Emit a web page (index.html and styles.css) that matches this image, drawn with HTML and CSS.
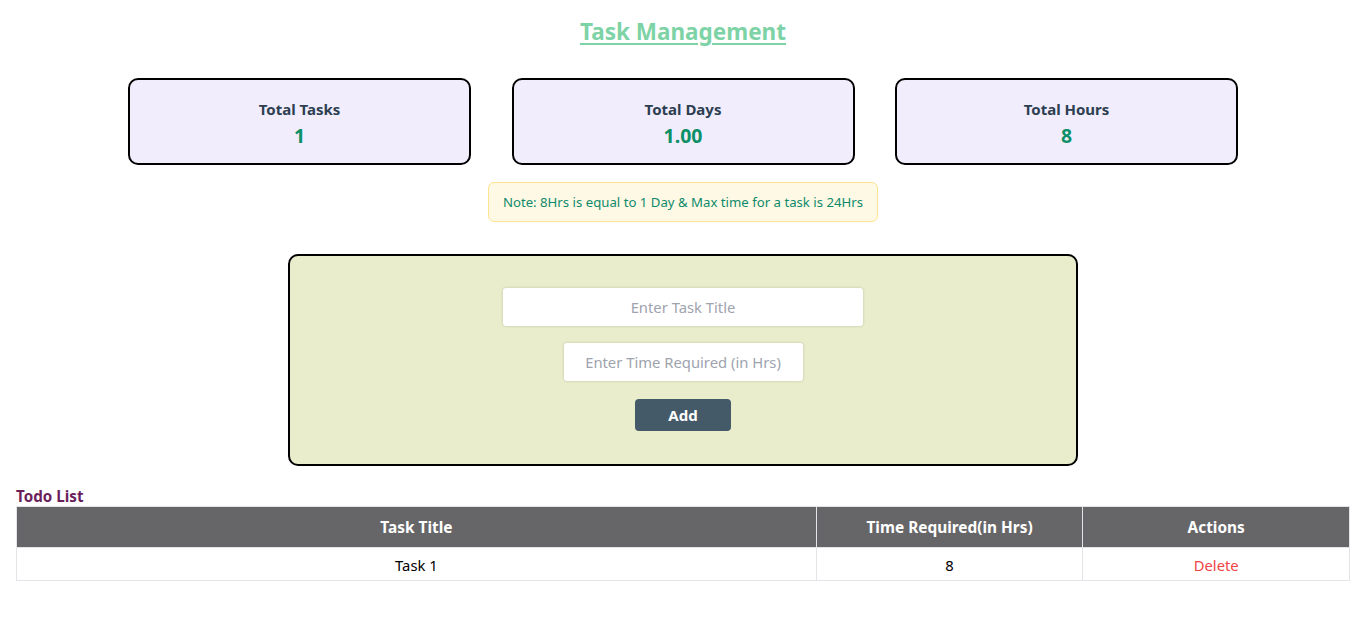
FILE: index.html
```html
<!DOCTYPE html>
<html lang="en">
<head>
<meta charset="utf-8">
<title>Task Management</title>
<link rel="stylesheet" href="styles.css">
</head>
<body>
<div class="app">
  <h1 class="title">Task Management</h1>
  <div class="cards">
    <div class="card"><div class="card-label">Total Tasks</div><div class="card-value">1</div></div>
    <div class="card"><div class="card-label">Total Days</div><div class="card-value">1.00</div></div>
    <div class="card"><div class="card-label">Total Hours</div><div class="card-value">8</div></div>
  </div>
  <div class="note-wrap"><div class="note">Note: 8Hrs is equal to 1 Day &amp; Max time for a task is 24Hrs</div></div>
  <div class="form-wrap">
    <div class="form">
      <input class="input input-title" type="text" placeholder="Enter Task Title">
      <input class="input input-time" type="text" placeholder="Enter Time Required (in Hrs)">
      <button class="btn">Add</button>
    </div>
  </div>
  <div class="list-title">Todo List</div>
  <table class="table">
    <thead>
      <tr><th class="c1">Task Title</th><th class="c2">Time Required(in Hrs)</th><th class="c3">Actions</th></tr>
    </thead>
    <tbody>
      <tr><td>Task 1</td><td>8</td><td class="del">Delete</td></tr>
    </tbody>
  </table>
</div>
</body>
</html>
```

FILE: styles.css
```css
* { box-sizing: border-box; }
body {
  margin: 0;
  background: #fff;
  font-family: "Noto Sans", "Open Sans", sans-serif;
  color: #000;
}
.app { padding: 0 16px; }
.title {
  margin: 0;
  padding-top: 16px;
  height: 78px;
  text-align: center;
  font-size: 22.5px;
  line-height: 32px;
  font-weight: 700;
  color: #7dd3a6;
  text-decoration: underline;
  text-underline-offset: 3px;
  text-decoration-thickness: 2px;
}
.cards {
  display: flex;
  justify-content: center;
  gap: 40.5px;
}
.card {
  width: 343px;
  height: 87px;
  background: #f1edfd;
  border: 2px solid #000;
  border-radius: 10px;
  display: flex;
  flex-direction: column;
  align-items: center;
  padding-top: 18px;
}
.card-label {
  font-size: 15px;
  line-height: 22px;
  font-weight: 700;
  color: #2c3e50;
}
.card-value {
  margin-top: 3px;
  font-size: 19.5px;
  line-height: 26px;
  font-weight: 700;
  color: #0d9068;
}
.note-wrap {
  display: flex;
  justify-content: center;
  margin-top: 17px;
}
.note {
  width: 390px;
  height: 40px;
  background: #fef9e4;
  border: 1px solid #fde58f;
  border-radius: 6px;
  color: #0f8a6c;
  font-size: 13.2px;
  display: flex;
  align-items: center;
  justify-content: center;
}
.form-wrap {
  display: flex;
  justify-content: center;
  margin-top: 32px;
}
.form {
  width: 790px;
  height: 212px;
  background: #e9edcb;
  border: 2px solid #000;
  border-radius: 10px;
  display: flex;
  flex-direction: column;
  align-items: center;
  padding-top: 32px;
}
.input {
  height: 38px;
  border: none;
  background: #fff;
  border-radius: 3px;
  box-shadow: 0 0 3px rgba(0,0,0,0.18);
  text-align: center;
  font-family: inherit;
  font-size: 14.8px;
  color: #333;
  outline: none;
}
.input::placeholder { color: #9ea3ae; }
.input-title { width: 360px; }
.input-time { width: 239px; margin-top: 17px; }
.btn {
  margin-top: 18px;
  width: 96px;
  height: 32px;
  border: none;
  border-radius: 4px;
  background: #445a68;
  color: #fff;
  font-family: inherit;
  font-weight: 700;
  font-size: 15px;
}
.list-title {
  margin-top: 21px;
  margin-bottom: 1px;
  font-size: 15.2px;
  line-height: 18px;
  font-weight: 700;
  color: #6a1f5c;
}
.table {
  width: 100%;
  border-collapse: collapse;
  font-size: 14.8px;
}
.table th, .table td {
  border: 1px solid #e3e4e8;
  text-align: center;
}
.table th {
  background: #666668;
  color: #fff;
  font-weight: 700;
  font-size: 15.4px;
  height: 41px;
}
.table td { height: 33px; padding-top: 2px; }
.c1 { width: 60%; }
.c2 { width: 20%; }
.c3 { width: 20%; }
.del { color: #f04444; }
```
